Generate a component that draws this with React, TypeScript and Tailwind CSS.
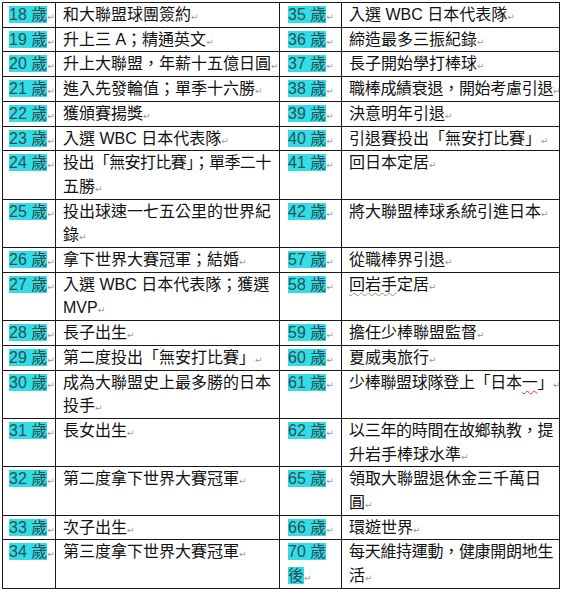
import React from "react";

type Line = React.ReactNode;
type Entry = { age: string[]; text: Line[] };

const left: Entry[] = [
  { age: ["18 歲"], text: ["和大聯盟球團簽約"] },
  { age: ["19 歲"], text: ["升上三 A；精通英文"] },
  { age: ["20 歲"], text: ["升上大聯盟，年薪十五億日圓"] },
  { age: ["21 歲"], text: ["進入先發輪值；單季十六勝"] },
  { age: ["22 歲"], text: ["獲頒賽揚獎"] },
  { age: ["23 歲"], text: ["入選 WBC 日本代表隊"] },
  { age: ["24 歲"], text: [<span className="tracking-[-0.6px]">投出「無安打比賽」；單季二十</span>, "五勝"] },
  { age: ["25 歲"], text: ["投出球速一七五公里的世界紀", "錄"] },
  { age: ["26 歲"], text: ["拿下世界大賽冠軍；結婚"] },
  { age: ["27 歲"], text: ["入選 WBC 日本代表隊；獲選", "MVP"] },
  { age: ["28 歲"], text: ["長子出生"] },
  { age: ["29 歲"], text: ["第二度投出「無安打比賽」"] },
  { age: ["30 歲"], text: ["成為大聯盟史上最多勝的日本", "投手"] },
  { age: ["31 歲"], text: ["長女出生"] },
  { age: ["32 歲"], text: ["第二度拿下世界大賽冠軍"] },
  { age: ["33 歲"], text: ["次子出生"] },
  { age: ["34 歲"], text: ["第三度拿下世界大賽冠軍"] },
];

const right: Entry[] = [
  { age: ["35 歲"], text: ["入選 WBC 日本代表隊"] },
  { age: ["36 歲"], text: ["締造最多三振紀錄"] },
  { age: ["37 歲"], text: ["長子開始學打棒球"] },
  { age: ["38 歲"], text: [<span className="tracking-[-0.3px]">職棒成績衰退，開始考慮引退</span>] },
  { age: ["39 歲"], text: ["決意明年引退"] },
  { age: ["40 歲"], text: ["引退賽投出「無安打比賽」"] },
  { age: ["41 歲"], text: ["回日本定居"] },
  { age: ["42 歲"], text: ["將大聯盟棒球系統引進日本"] },
  { age: ["57 歲"], text: ["從職棒界引退"] },
  {
    age: ["58 歲"],
    text: [
      <>
        <span className="underline decoration-wavy decoration-[#8a9a70] decoration-1 underline-offset-2">回岩手</span>定居
      </>,
    ],
  },
  { age: ["59 歲"], text: ["擔任少棒聯盟監督"] },
  { age: ["60 歲"], text: ["夏威夷旅行"] },
  {
    age: ["61 歲"],
    text: [
      <span className="tracking-[-0.3px]">
        少棒聯盟球隊登上「日本
        <span className="underline decoration-wavy decoration-[#e03030] decoration-1 underline-offset-2">一</span>」
      </span>,
    ],
  },
  { age: ["62 歲"], text: [<span className="tracking-[-0.3px]">以三年的時間在故鄉執教，提</span>, "升岩手棒球水準"] },
  { age: ["65 歲"], text: ["領取大聯盟退休金三千萬日", "圓"] },
  { age: ["66 歲"], text: ["環遊世界"] },
  { age: ["70 歲", "後"], text: [<span className="tracking-[-0.3px]">每天維持運動，健康開朗地生</span>, "活"] },
];

function Mark() {
  return <span className="font-['DejaVu_Sans'] text-[9px] leading-none text-[#9a9a9a]">↵</span>;
}

function AgeCell({ age, pl }: { age: string[]; pl: string }) {
  return (
    <td className={`border border-[#1a1a1a] align-top whitespace-nowrap ${pl}`}>
      {age.map((a, i) => (
        <div key={i}>
          <span className="bg-[#33dde5] text-[#2b4f57]">{a}</span>
          {i === age.length - 1 && <Mark />}
        </div>
      ))}
    </td>
  );
}

function TextCell({ text, pl }: { text: Line[]; pl: string }) {
  return (
    <td className={`border border-[#1a1a1a] align-top whitespace-nowrap overflow-visible ${pl}`}>
      {text.map((t, i) => (
        <div key={i}>
          {t}
          {i === text.length - 1 && <Mark />}
        </div>
      ))}
    </td>
  );
}

export default function App() {
  return (
    <div className="w-[561px] h-[592px] bg-white pt-[2px] pl-[2px] overflow-hidden">
      <table className="table-fixed border-collapse w-[557px] text-[16px] leading-[23.7px] text-[#111] font-['Liberation_Sans','Noto_Sans_CJK_TC',sans-serif]">
        <colgroup>
          <col className="w-[53px]" />
          <col className="w-[224px]" />
          <col className="w-[62px]" />
          <col className="w-[218px]" />
        </colgroup>
        <tbody>
          {left.map((l, i) => (
            <tr key={i}>
              <AgeCell age={l.age} pl="pl-[6px]" />
              <TextCell text={l.text} pl="pl-[7px]" />
              <AgeCell age={right[i].age} pl="pl-[8px]" />
              <TextCell text={right[i].text} pl="pl-[7px]" />
            </tr>
          ))}
        </tbody>
      </table>
    </div>
  );
}
